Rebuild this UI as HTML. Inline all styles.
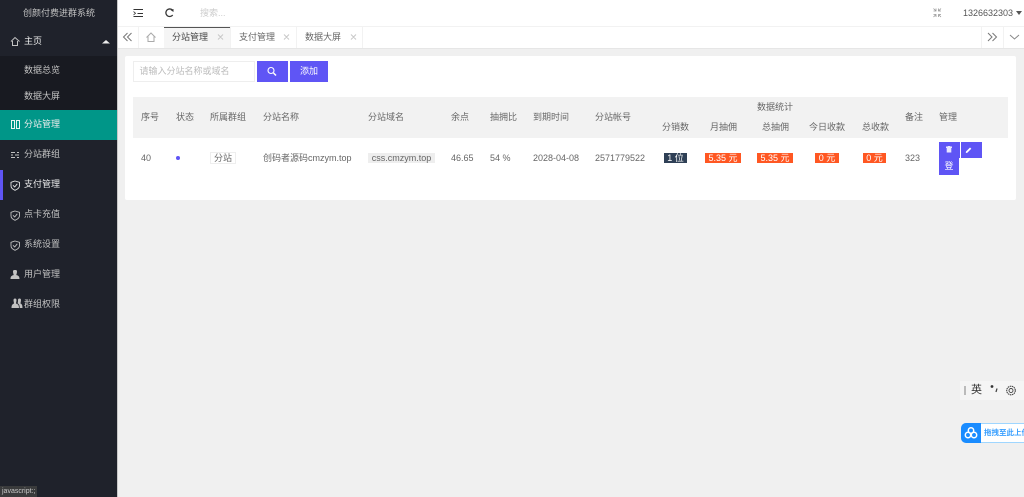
<!DOCTYPE html>
<html lang="zh"><head><meta charset="utf-8"><title>分站管理</title>
<style>
html,body{margin:0;padding:0;width:1024px;height:497px;overflow:hidden;background:#f0f0f0}
body{position:relative;font-family:"Liberation Sans","Noto Sans CJK SC",sans-serif;font-size:9px;color:#666}
#w{position:absolute;left:0;top:0;width:1024px;height:497px;overflow:hidden;filter:blur(.3px)}
.a{position:absolute;white-space:nowrap;line-height:12px}
.b{position:absolute}
.s{color:#c2c2c2}
.o{position:absolute;background:#ff5722;color:#fff;height:10px;line-height:10px;text-align:center;top:153px}
svg{position:absolute;overflow:visible}
</style></head><body><div id="w">
<!-- sidebar -->
<div class="b" style="left:0;top:0;width:117px;height:497px;background:#1f222b"></div>
<div class="b" style="left:117px;top:0;width:1px;height:497px;background:#c8c8c8"></div>
<div class="b" style="left:0;top:56px;width:117px;height:54px;background:#181a21"></div>
<div class="b" style="left:0;top:110px;width:117px;height:30px;background:#009688"></div>
<div class="b" style="left:0;top:170px;width:3px;height:30px;background:#5f55f5"></div>
<div class="a s" style="left:23px;top:7px">创颜付费进群系统</div>
<div class="a" style="left:24px;top:35px;color:#eee">主页</div>
<svg style="left:0;top:0" width="117" height="320" fill="none" stroke="#c2c2c2" stroke-width="1">
<path d="M11 41.500L15 37.500L19.500 41.500M12.500 41V45.500H17.500V41"/>
<path d="M102 43.500L106 40L110 43.500Z" fill="#eee" stroke="none"/>
<path d="M11.500 120.500H14.500V128.500H11.500ZM16.500 120.500H19.500V128.500H16.500Z" stroke="#e8f5f3"/>
<path d="M11 152.500H15M17 152.500H19M11 155H13M15 155H19M11 157.500H15M17 157.500H19"/>
<path d="M15 181L19.500 182.300V185.800C19.500 188 17.500 189.300 15 190.300C12.500 189.300 11 188 11 185.800V182.300Z" stroke="#e6e6e6" stroke-width=".9"/><path d="M13 185.300L14.700 187L17.300 183.800" stroke="#e6e6e6" stroke-width=".9"/>
<path d="M15 211L19.500 212.300V215.800C19.500 218 17.500 219.300 15 220.300C12.500 219.300 11 218 11 215.800V212.300Z" stroke-width=".9"/><path d="M13 215.300L14.700 217L17.300 213.800" stroke-width=".9"/>
<path d="M15 241L19.500 242.300V245.800C19.500 248 17.500 249.300 15 250.300C12.500 249.300 11 248 11 245.800V242.300Z" stroke-width=".9"/><path d="M13 245.300L14.700 247L17.300 243.800" stroke-width=".9"/>
<path d="M13 271.500C13 270 14 270 15 270C16 270 17 270 17 271.500C17 273 16.500 274 16.300 275C18 275.500 19.500 276 19.500 279H10.500C10.500 276 12 275.500 13.700 275C13.500 274 13 273 13 271.500Z" fill="#c2c2c2" stroke="none"/>
<path d="M13.500 300C13.500 299 14.200 298.500 15 298.500C15.800 298.500 16.500 299 16.500 300C16.500 301.500 16 302.500 16 303.500C17.500 304 19 304.500 19 308H11.500C11.500 304.500 13 304 14 303.500C14 302.500 13.500 301.500 13.500 300ZM18 300C18 299 18.500 298.500 19.500 298.500C20.500 298.500 21 299 21 300C21 301.500 20.500 302.500 20.500 303.500C21.500 304 22.500 304.500 22.500 308H19.700C19.700 305 18.800 304 17.500 303.300C18 302.500 18 301 18 300Z" fill="#c2c2c2" stroke="none"/>
</svg>
<div class="a s" style="left:24px;top:64px">数据总览</div>
<div class="a s" style="left:24px;top:90px">数据大屏</div>
<div class="a" style="left:24px;top:118px;color:#eee">分站管理</div>
<div class="a s" style="left:24px;top:148px">分站群组</div>
<div class="a" style="left:24px;top:178px;color:#eee">支付管理</div>
<div class="a s" style="left:24px;top:208px">点卡充值</div>
<div class="a s" style="left:24px;top:238px">系统设置</div>
<div class="a s" style="left:24px;top:268px">用户管理</div>
<div class="a s" style="left:24px;top:298px">群组权限</div>
<div class="a" style="left:0;top:486px;height:11px;line-height:11px;width:37px;background:#3a3b3c;color:#c8c8c8;font-size:7px;text-indent:2px;overflow:hidden">javascript:;</div>

<!-- top bar -->
<div class="b" style="left:118px;top:0;width:906px;height:27px;background:#fff;border-bottom:1px solid #f2f2f2;box-sizing:border-box"></div>
<svg style="left:118px;top:0" width="130" height="27" fill="none" stroke="#333" stroke-width="1">
<path d="M15.500 9.500H25M19.500 13.500H25M15.500 16.500H25"/><path d="M15.500 11.500L17.500 13.300L15.500 15" stroke-width=".8"/>
<path d="M54.500 10.200A3.800 3.800 0 1 0 54.700 15" stroke-width="1.300"/><path d="M52.500 10L55.500 9V12Z" fill="#333" stroke="none"/>
</svg>
<div class="a" style="left:200px;top:7px;color:#ccc">搜索...</div>
<svg style="left:930px;top:6px" width="14" height="12" fill="none" stroke="#999" stroke-width="1">
<path d="M3.500 2.500L6 5M6 2.500V5H3.500M11 2.500L8.500 5M8.500 2.500V5H11M3.500 11L6 8.500M3.500 8.500H6V11M11 11L8.500 8.500M11 8.500H8.500V11" stroke-width=".8"/>
</svg>
<div class="a" style="left:963px;top:7px;color:#555">1326632303</div>
<div class="b" style="left:1015.500px;top:11px;width:0;height:0;border:3.500px solid transparent;border-top:4px solid #555;border-bottom:0"></div>

<!-- tabs -->
<div class="b" style="left:118px;top:27px;width:906px;height:21px;background:#fff;border-bottom:1px solid #e6e6e6"></div>
<div class="b" style="left:164px;top:27px;width:66px;height:21px;background:#f5f5f5;border-top:1px solid #555;box-sizing:border-box"></div>
<div class="b" style="left:138px;top:27px;width:1px;height:21px;background:#f2f2f2"></div>
<div class="b" style="left:230px;top:27px;width:1px;height:21px;background:#f2f2f2"></div>
<div class="b" style="left:296px;top:27px;width:1px;height:21px;background:#f2f2f2"></div>
<div class="b" style="left:362px;top:27px;width:1px;height:21px;background:#f2f2f2"></div>
<div class="b" style="left:981px;top:27px;width:1px;height:21px;background:#f2f2f2"></div>
<div class="b" style="left:1003px;top:27px;width:1px;height:21px;background:#f2f2f2"></div>
<svg style="left:118px;top:27px" width="906" height="21" fill="none" stroke="#777" stroke-width="1">
<path d="M9.500 6L5.500 10L9.500 14M13.500 6L9.500 10L13.500 14"/>
<path d="M28.500 10.500L33 6L37.500 10.500M30 9.500V14.500H36V9.500" stroke="#aaa"/>
<path d="M100 7.500L105 12.500M105 7.500L100 12.500M166 7.500L171 12.500M171 7.500L166 12.500M233 7.500L238 12.500M238 7.500L233 12.500" stroke="#c8c8c8"/>
<path d="M870 6L874 10L870 14M874.500 6L878.500 10L874.500 14"/>
<path d="M892 8L896.500 12L901 8" stroke="#888"/>
</svg>
<div class="a" style="left:172px;top:31px;color:#444">分站管理</div>
<div class="a" style="left:239px;top:31px">支付管理</div>
<div class="a" style="left:305px;top:31px">数据大屏</div>

<!-- card -->
<div class="b" style="left:125px;top:56px;width:891px;height:144px;background:#fff;border-radius:2px"></div>
<div class="b" style="left:133px;top:61px;width:122px;height:21px;background:#fff;border:1px solid #eee;box-sizing:border-box"></div>
<div class="a" style="left:139.500px;top:65px;color:#bbb">请输入分站名称或域名</div>
<div class="b" style="left:257px;top:61px;width:31px;height:21px;background:#5f55f5"></div>
<svg style="left:266px;top:66px" width="12" height="11" fill="none" stroke="#fff" stroke-width="1.100"><circle cx="5" cy="4.500" r="3"/><path d="M7.500 7L10 9.500" stroke-width="1.500"/></svg>
<div class="a" style="left:290px;top:61px;width:38px;height:21px;line-height:21px;background:#5f55f5;color:#fff;text-align:center">添加</div>

<!-- table -->
<div class="b" style="left:133px;top:97px;width:875px;height:41px;background:#f2f2f2"></div>
<div class="a" style="left:141px;top:111px">序号</div>
<div class="a" style="left:176px;top:111px">状态</div>
<div class="a" style="left:210px;top:111px">所属群组</div>
<div class="a" style="left:263px;top:111px">分站名称</div>
<div class="a" style="left:368px;top:111px">分站域名</div>
<div class="a" style="left:451px;top:111px">余点</div>
<div class="a" style="left:490px;top:111px">抽拥比</div>
<div class="a" style="left:533px;top:111px">到期时间</div>
<div class="a" style="left:595px;top:111px">分站帐号</div>
<div class="a" style="left:757px;top:101px">数据统计</div>
<div class="a" style="left:662px;top:121px">分销数</div>
<div class="a" style="left:710px;top:121px">月抽佣</div>
<div class="a" style="left:762px;top:121px">总抽佣</div>
<div class="a" style="left:809px;top:121px">今日收款</div>
<div class="a" style="left:862px;top:121px">总收款</div>
<div class="a" style="left:905px;top:111px">备注</div>
<div class="a" style="left:939px;top:111px">管理</div>

<div class="a" style="left:141px;top:152px">40</div>
<div class="b" style="left:176px;top:156px;width:4px;height:4px;border-radius:50%;background:#5f55f5"></div>
<div class="a" style="left:210px;top:152px;height:10px;line-height:10px;width:24px;text-align:center;border:1px solid #eee">分站</div>
<div class="a" style="left:263px;top:152px">创码者源码cmzym.top</div>
<div class="a" style="left:368px;top:153px;height:10px;line-height:10px;width:67px;text-align:center;background:#eee">css.cmzym.top</div>
<div class="a" style="left:451px;top:152px">46.65</div>
<div class="a" style="left:490px;top:152px">54 %</div>
<div class="a" style="left:533px;top:152px">2028-04-08</div>
<div class="a" style="left:595px;top:152px">2571779522</div>
<div class="o" style="left:664px;width:23px;background:#2f4056">1 位</div>
<div class="o" style="left:705px;width:36px">5.35 元</div>
<div class="o" style="left:757px;width:36px">5.35 元</div>
<div class="o" style="left:815px;width:24px">0 元</div>
<div class="o" style="left:863px;width:23px">0 元</div>
<div class="a" style="left:905px;top:152px">323</div>
<div class="b" style="left:939px;top:142px;width:21px;height:16px;background:#5f55f5"></div>
<div class="b" style="left:961px;top:142px;width:21px;height:16px;background:#5f55f5"></div>
<div class="a" style="left:939px;top:158px;width:20px;height:17px;line-height:17px;background:#5f55f5;color:#fff;text-align:center">登</div>
<svg style="left:939px;top:142px" width="44" height="16" fill="#e8e6ff" stroke="none">
<path d="M7 4.500H8.500L9 4H11L11.500 4.500H13V6H12.300V10.500H7.700V6H7Z"/>
<path d="M27 9.500L31 5.500L32.300 6.800L28.300 10.800L26.800 11Z" fill="#fff"/>
</svg>

<!-- floating widgets -->
<div class="b" style="left:960px;top:381px;width:64px;height:19px;background:#f5f5f5"></div>
<div class="b" style="left:964px;top:386px;width:2px;height:9px;background:#bbb"></div>
<div class="a" style="left:971px;top:384px;font-size:11px;color:#333">英</div>
<svg style="left:988px;top:384px" width="32" height="14" fill="none" stroke="#444">
<circle cx="4" cy="2.500" r="1.400" fill="#333" stroke="none"/><path d="M9 4.500L8 8" stroke-width="1.300"/>
<circle cx="23" cy="6.500" r="4.300" stroke-width="1.100" stroke-dasharray="1.500 .6"/><circle cx="23" cy="6.500" r="2" stroke-width=".9"/>
</svg>
<div class="b" style="left:961px;top:423px;width:70px;height:20px;background:#fff;border:1px solid #9fd6ff;box-sizing:border-box;border-radius:5px"></div>
<div class="b" style="left:961px;top:423px;width:20px;height:20px;background:#1a8cff;border-radius:5px 0 0 5px"></div>
<svg style="left:961px;top:423px" width="20" height="20" fill="none" stroke="#fff" stroke-width="1.500"><circle cx="10" cy="7.500" r="2.700"/><circle cx="7" cy="12" r="2.700"/><circle cx="13" cy="12" r="2.700"/></svg>
<div class="a" style="left:984px;top:427px;font-size:7.500px;font-weight:bold;color:#3aa0ff">拖拽至此上传</div>
</div></body></html>
